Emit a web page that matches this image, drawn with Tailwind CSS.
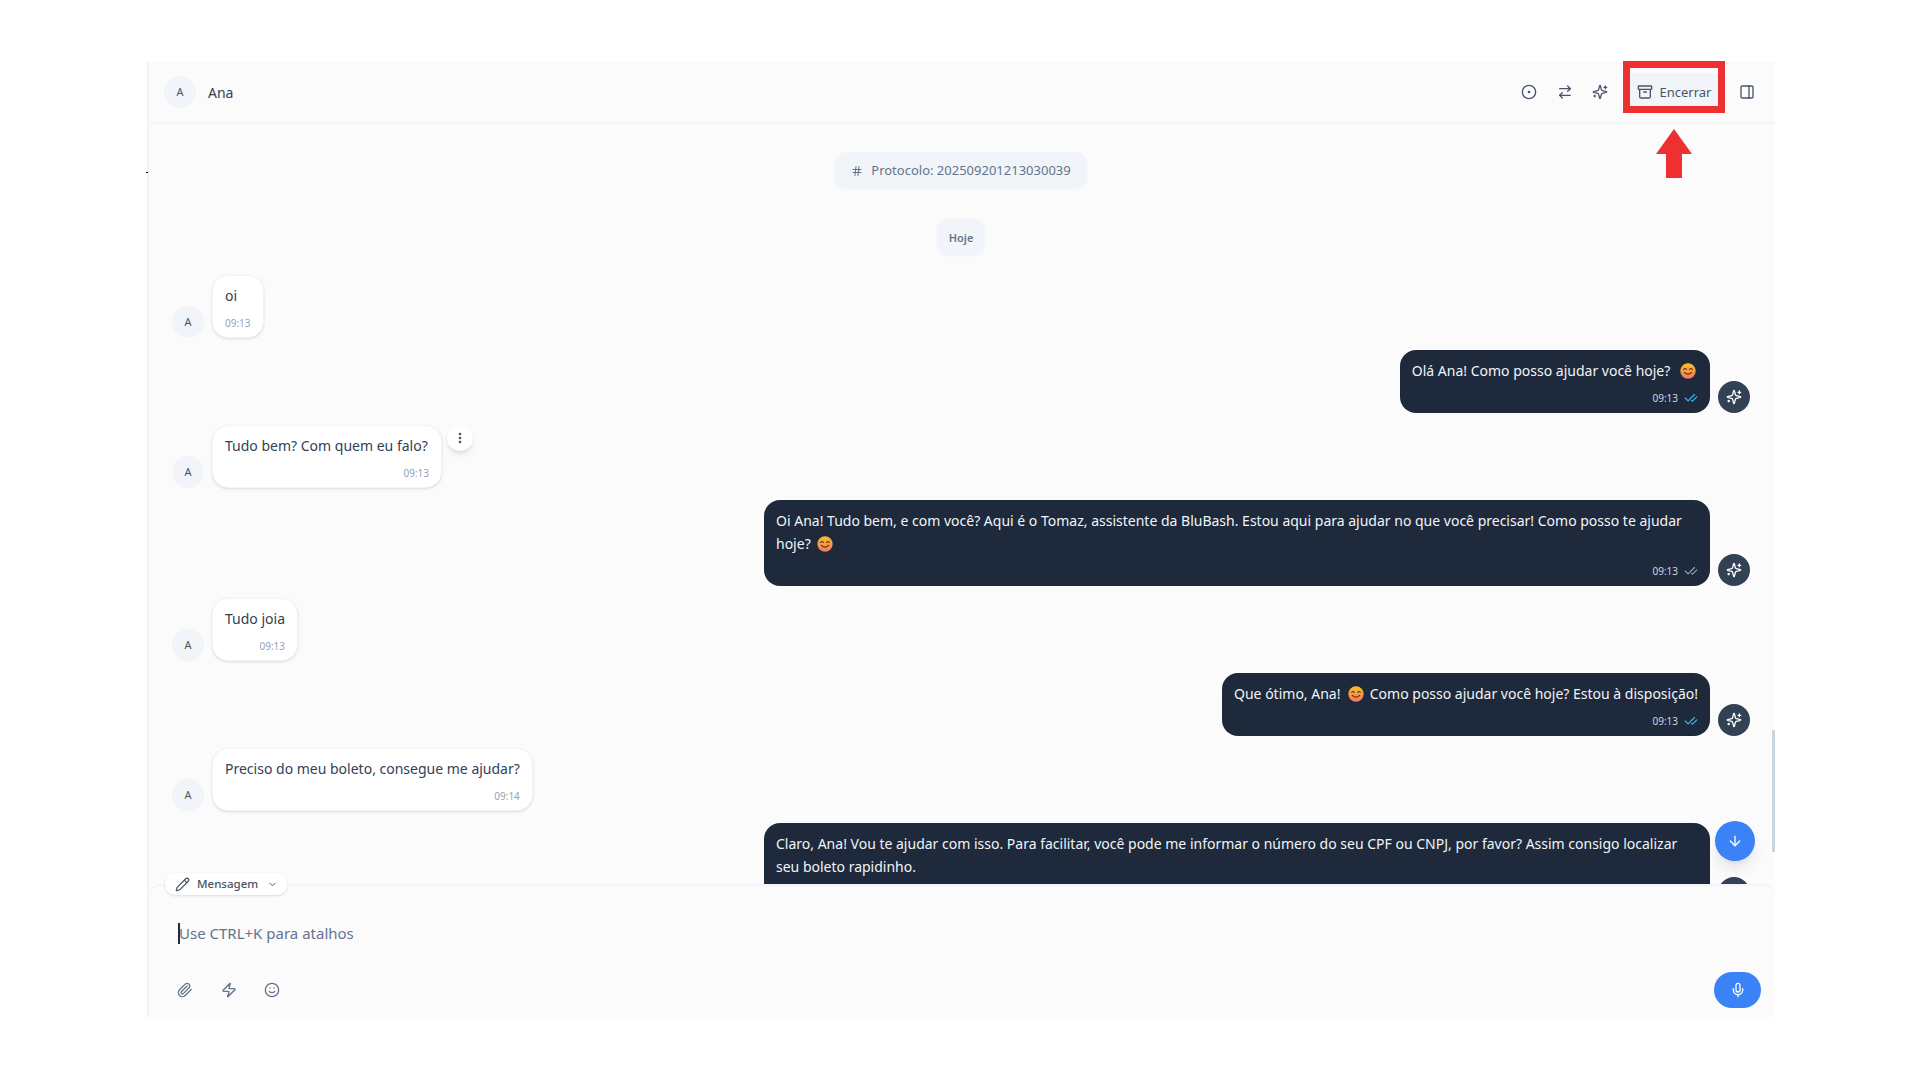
<!DOCTYPE html>
<html lang="pt">
<head>
  <meta charset="UTF-8" />
  <title>Chat - Ana</title>
  <script src="https://cdn.jsdelivr.net/npm/@tailwindcss/browser@4"></script>
</head>
<body class="bg-white min-h-screen font-['Noto_Sans',sans-serif] text-[#334155]">

  <svg class="absolute w-0 h-0">
    <defs><linearGradient id="emoji-fill" x1="0" y1="0" x2="0" y2="1"><stop offset="0" stop-color="#fbbf24"/><stop offset="1" stop-color="#f4766a"/></linearGradient></defs>
    <symbol id="sparkles" viewBox="0 0 24 24" fill="none" stroke="currentColor" stroke-width="2" stroke-linecap="round" stroke-linejoin="round">
      <path d="M9.937 15.5A2 2 0 0 0 8.5 14.063l-6.135-1.582a.5.5 0 0 1 0-.962L8.5 9.936A2 2 0 0 0 9.937 8.5l1.582-6.135a.5.5 0 0 1 .963 0L14.063 8.5A2 2 0 0 0 15.5 9.937l6.135 1.581a.5.5 0 0 1 0 .964L15.5 14.063a2 2 0 0 0-1.437 1.437l-1.582 6.135a.5.5 0 0 1-.963 0z"/><path d="M20 3v4"/><path d="M22 5h-4"/><path d="M4 17v2"/><path d="M5 18H3"/>
    </symbol>
    <symbol id="checks" viewBox="0 0 24 24" fill="none" stroke="currentColor" stroke-width="2" stroke-linecap="round" stroke-linejoin="round">
      <path d="M18 6 7 17l-5-5"/><path d="m22 10-7.5 7.5L13 16"/>
    </symbol>
    <symbol id="smile-emoji" viewBox="0 0 24 24">
      <circle cx="12" cy="12" r="11.5" fill="url(#emoji-fill)"/>
      <path d="M5.5 9.5q2-2.4 4 0M14.5 9.5q2-2.4 4 0" fill="none" stroke="#5b3416" stroke-width="1.7" stroke-linecap="round"/>
      <path d="M6.5 14q5.500 5.500 11 0" fill="none" stroke="#5b3416" stroke-width="1.8" stroke-linecap="round"/>
    </symbol>
  </svg>

  <!-- Chat panel -->
  <div class="absolute top-[62px] left-[147px] w-[1628px] h-[955px] flex flex-col bg-[#fbfbfc] border-l-2 border-[#f1f5f9]">

    <!-- Header -->
    <header class="h-[62px] shrink-0 flex items-center justify-between pl-[15px] pr-[20px] border-b-2 border-[#f1f5f9]">
      <div class="flex items-center gap-3">
        <div class="w-8 h-8 rounded-full bg-[#f1f5f9] flex items-center justify-center text-[11px] text-[#475569]">A</div>
        <span class="text-[14px] text-[#334155]">Ana</span>
      </div>
      <div class="flex items-center text-[#475569]">
        <svg class="w-4 h-4" viewBox="0 0 24 24" fill="none" stroke="currentColor" stroke-width="2" stroke-linecap="round" stroke-linejoin="round"><circle cx="12" cy="12" r="10"/><circle cx="12" cy="12" r="1"/></svg>
        <svg class="w-4 h-4 ml-5" viewBox="0 0 24 24" fill="none" stroke="currentColor" stroke-width="2" stroke-linecap="round" stroke-linejoin="round"><path d="m16 3 4 4-4 4"/><path d="M20 7H4"/><path d="m8 21-4-4 4-4"/><path d="M4 17h16"/></svg>
        <svg class="w-4 h-4 ml-[19px]"><use href="#sparkles"/></svg>
        <button class="ml-[22px] h-[38px] w-[88px] bg-[#f1f5f9] flex items-center justify-center gap-[7px] text-[13px] text-[#475569]">
          <svg class="w-4 h-4" viewBox="0 0 24 24" fill="none" stroke="currentColor" stroke-width="2" stroke-linecap="round" stroke-linejoin="round"><rect width="20" height="5" x="2" y="3" rx="1"/><path d="M4 8v11a2 2 0 0 0 2 2h12a2 2 0 0 0 2-2V8"/><path d="M10 12h4"/></svg>
          <span class="leading-[16px]">Encerrar</span>
        </button>
        <svg class="w-4 h-4 ml-[21px]" viewBox="0 0 24 24" fill="none" stroke="currentColor" stroke-width="2" stroke-linecap="round" stroke-linejoin="round"><rect width="18" height="18" x="3" y="3" rx="2"/><path d="M15 3v18"/></svg>
      </div>
    </header>

    <!-- Messages -->
    <main class="relative flex-1 overflow-hidden pt-[28px] pl-[23px] pr-[25px] flex flex-col">
      <div class="shrink-0 self-center h-[36px] w-[252px] rounded-[12px] bg-[#f1f5f9] flex items-center justify-center gap-[8px] pt-[2px] text-[13px] text-[#64748b] shadow-sm shadow-slate-100">
        <svg class="w-3 h-3 text-[#64748b]" viewBox="0 0 24 24" fill="none" stroke="currentColor" stroke-width="2" stroke-linecap="round"><path d="M4 9h16M4 15h16M10 3 8 21M16 3l-2 18"/></svg>
        Protocolo: 202509201213030039
      </div>
      <div class="shrink-0 self-center mt-[31px] h-[36px] w-[48px] rounded-[12px] bg-[#f1f5f9] flex items-center justify-center pt-[3px] text-[11px] font-semibold text-[#64748b] shadow-sm shadow-slate-100">Hoje</div>

      <div class="shrink-0 mt-[20px] flex flex-col gap-3">
        <!-- oi -->
        <div class="flex items-end gap-2">
          <div class="w-8 h-8 rounded-full bg-[#f1f5f9] flex items-center justify-center text-[11px] text-[#475569]">A</div>
          <div class="bg-white rounded-[16px] border border-[#f1f5f9] shadow-sm px-3 pt-[8px] pb-[7px]">
            <p class="text-[14px] leading-[23px] text-[#334155]">oi</p>
            <p class="mt-[9px] h-[14px] leading-[14px] text-[10px] text-[#94a3b8] text-right">09:13</p>
          </div>
        </div>

        <!-- Olá -->
        <div class="flex items-end justify-end gap-2">
          <div class="bg-[#1e293b] rounded-[16px] px-3 pt-[9px] pb-[8px]">
            <p class="text-[14px] leading-[23px] text-[#f1f5f9]">Olá Ana! Como posso ajudar você hoje? <svg class="inline w-4 h-4 ml-[6px] mr-[2px] align-[-3px]"><use href="#smile-emoji"/></svg></p>
            <div class="mt-[9px] h-[14px] flex items-center justify-end gap-[6px] text-[10px] leading-[14px] text-[#cbd5e1]">09:13 <svg class="w-[14px] h-[14px] text-[#38bdf8]"><use href="#checks"/></svg></div>
          </div>
          <div class="w-8 h-8 rounded-full bg-[#334155] flex items-center justify-center text-white"><svg class="w-4 h-4"><use href="#sparkles"/></svg></div>
        </div>

        <!-- Tudo bem -->
        <div class="flex items-end gap-2">
          <div class="w-8 h-8 rounded-full bg-[#f1f5f9] flex items-center justify-center text-[11px] text-[#475569]">A</div>
          <div class="relative w-[230px] bg-white rounded-[16px] border border-[#f1f5f9] shadow-sm px-3 pt-[8px] pb-[7px]">
            <p class="text-[14px] leading-[23px] text-[#334155]">Tudo bem? Com quem eu falo?</p>
            <p class="mt-[9px] h-[14px] leading-[14px] text-[10px] text-[#94a3b8] text-right">09:13</p>
            <div class="absolute top-[-1px] left-full ml-[6px] w-[26px] h-[26px] rounded-full bg-white shadow-md flex items-center justify-center text-[#475569]">
              <svg class="w-4 h-4" viewBox="0 0 24 24" fill="currentColor"><circle cx="12" cy="6" r="2"/><circle cx="12" cy="12" r="2"/><circle cx="12" cy="18" r="2"/></svg>
            </div>
          </div>
        </div>

        <!-- Oi Ana -->
        <div class="flex items-end justify-end gap-2">
          <div class="w-[946px] bg-[#1e293b] rounded-[16px] px-3 pt-[9px] pb-[8px]">
            <p class="text-[14px] leading-[23px] text-[#f1f5f9]">Oi Ana! Tudo bem, e com você? Aqui é o Tomaz, assistente da BluBash. Estou aqui para ajudar no que você precisar! Como posso te ajudar hoje? <svg class="inline w-4 h-4 ml-[3px] align-[-3px]"><use href="#smile-emoji"/></svg></p>
            <div class="mt-[9px] h-[14px] flex items-center justify-end gap-[6px] text-[10px] leading-[14px] text-[#cbd5e1]">09:13 <svg class="w-[14px] h-[14px] text-[#94a3b8]"><use href="#checks"/></svg></div>
          </div>
          <div class="w-8 h-8 rounded-full bg-[#334155] flex items-center justify-center text-white"><svg class="w-4 h-4"><use href="#sparkles"/></svg></div>
        </div>

        <!-- Tudo joia -->
        <div class="flex items-end gap-2">
          <div class="w-8 h-8 rounded-full bg-[#f1f5f9] flex items-center justify-center text-[11px] text-[#475569]">A</div>
          <div class="bg-white rounded-[16px] border border-[#f1f5f9] shadow-sm px-3 pt-[8px] pb-[7px]">
            <p class="text-[14px] leading-[23px] text-[#334155]">Tudo joia</p>
            <p class="mt-[9px] h-[14px] leading-[14px] text-[10px] text-[#94a3b8] text-right">09:13</p>
          </div>
        </div>

        <!-- Que ótimo -->
        <div class="flex items-end justify-end gap-2">
          <div class="bg-[#1e293b] rounded-[16px] px-3 pt-[9px] pb-[8px]">
            <p class="text-[14px] leading-[23px] text-[#f1f5f9]">Que ótimo, Ana! <svg class="inline w-4 h-4 ml-[4px] mr-[2px] align-[-3px]"><use href="#smile-emoji"/></svg> Como posso ajudar você hoje? Estou à disposição!</p>
            <div class="mt-[9px] h-[14px] flex items-center justify-end gap-[6px] text-[10px] leading-[14px] text-[#cbd5e1]">09:13 <svg class="w-[14px] h-[14px] text-[#38bdf8]"><use href="#checks"/></svg></div>
          </div>
          <div class="w-8 h-8 rounded-full bg-[#334155] flex items-center justify-center text-white"><svg class="w-4 h-4"><use href="#sparkles"/></svg></div>
        </div>

        <!-- Preciso -->
        <div class="flex items-end gap-2">
          <div class="w-8 h-8 rounded-full bg-[#f1f5f9] flex items-center justify-center text-[11px] text-[#475569]">A</div>
          <div class="bg-white rounded-[16px] border border-[#f1f5f9] shadow-sm px-3 pt-[8px] pb-[7px]">
            <p class="text-[14px] leading-[23px] text-[#334155]">Preciso do meu boleto, consegue me ajudar?</p>
            <p class="mt-[9px] h-[14px] leading-[14px] text-[10px] text-[#94a3b8] text-right">09:14</p>
          </div>
        </div>

        <!-- Claro: cut off by the composer, its time row never shows -->
        <div class="flex items-end justify-end gap-2">
          <div class="w-[946px] bg-[#1e293b] rounded-[16px] px-3 pt-[9px] pb-[8px]">
            <p class="text-[14px] leading-[23px] text-[#f1f5f9]">Claro, Ana! Vou te ajudar com isso. Para facilitar, você pode me informar o número do seu CPF ou CNPJ, por favor? Assim consigo localizar seu boleto rapidinho.</p>
            <div class="mt-[9px] h-[14px]"></div>
          </div>
          <div class="w-8 h-8 rounded-full bg-[#334155] flex items-center justify-center text-white"><svg class="w-4 h-4"><use href="#sparkles"/></svg></div>
        </div>
      </div>

      <!-- Scroll to bottom + scrollbar -->
      <button class="absolute top-[697px] right-[20px] w-10 h-10 rounded-full bg-[#3b82f6] shadow-lg flex items-center justify-center text-white">
        <svg class="w-4 h-4" viewBox="0 0 24 24" fill="none" stroke="currentColor" stroke-width="2" stroke-linecap="round" stroke-linejoin="round"><path d="M12 5v14"/><path d="m19 12-7 7-7-7"/></svg>
      </button>
      <div class="absolute top-[606px] right-0 w-[3px] h-[122px] bg-[#cbd5e1]"></div>
    </main>

    <!-- Composer -->
    <footer class="relative h-[133px] shrink-0 bg-[#fbfbfc] border-t-2 border-[#f1f5f9] rounded-t-[12px] pl-[29px] pr-[14px]">
      <div class="absolute top-[-13px] left-[16px] w-[122px] h-[22px] rounded-[10px] bg-white shadow-sm flex items-center pl-[10px] gap-[7px] text-[11.500px] font-medium text-[#475569]">
        <svg class="w-[15px] h-[15px]" viewBox="0 0 24 24" fill="none" stroke="currentColor" stroke-width="2" stroke-linecap="round" stroke-linejoin="round"><path d="M21.174 6.812a1 1 0 0 0-3.986-3.987L3.842 16.174a2 2 0 0 0-.5.83l-1.321 4.352a.5.5 0 0 0 .623.622l4.353-1.32a2 2 0 0 0 .83-.497z"/><path d="m15 5 4 4"/></svg>
        Mensagem
        <svg class="w-[11px] h-[11px] ml-[2px]" viewBox="0 0 24 24" fill="none" stroke="currentColor" stroke-width="2" stroke-linecap="round" stroke-linejoin="round"><path d="m6 9 6 6 6-6"/></svg>
      </div>
      <div class="pt-[37px] flex items-center h-[58px]">
        <span class="w-[2px] h-[21px] bg-[#1e293b] shrink-0"></span>
        <span class="text-[15px] leading-[21px] text-[#64748b] -ml-[1px]">Use CTRL+K para atalhos</span>
      </div>
      <div class="mt-[28px] flex items-center justify-between">
        <div class="flex items-center text-[#64748b] -ml-[1px]">
          <svg class="w-4 h-4" viewBox="0 0 24 24" fill="none" stroke="currentColor" stroke-width="2" stroke-linecap="round" stroke-linejoin="round"><path d="m21.440 11.050-9.190 9.190a6 6 0 0 1-8.490-8.490l8.570-8.570A4 4 0 1 1 18 8.840l-8.590 8.570a2 2 0 0 1-2.830-2.830l8.490-8.480"/></svg>
          <svg class="w-4 h-4 ml-[28px]" viewBox="0 0 24 24" fill="none" stroke="currentColor" stroke-width="2" stroke-linecap="round" stroke-linejoin="round"><path d="M4 14a1 1 0 0 1-.78-1.630l9.900-10.200a.5.5 0 0 1 .86.46l-1.920 6.020A1 1 0 0 0 13 10h7a1 1 0 0 1 .78 1.630l-9.900 10.200a.5.5 0 0 1-.86-.46l1.920-6.020A1 1 0 0 0 11 14z"/></svg>
          <svg class="w-4 h-4 ml-[27px]" viewBox="0 0 24 24" fill="none" stroke="currentColor" stroke-width="2" stroke-linecap="round" stroke-linejoin="round"><circle cx="12" cy="12" r="10"/><path d="M8 14s1.500 2 4 2 4-2 4-2"/><line x1="9" x2="9.010" y1="9" y2="9"/><line x1="15" x2="15.010" y1="9" y2="9"/></svg>
        </div>
        <button class="w-[47px] h-[36px] rounded-full bg-[#3b82f6] flex items-center justify-center text-white">
          <svg class="w-4 h-4" viewBox="0 0 24 24" fill="none" stroke="currentColor" stroke-width="2" stroke-linecap="round" stroke-linejoin="round"><path d="M12 2a3 3 0 0 0-3 3v7a3 3 0 0 0 6 0V5a3 3 0 0 0-3-3Z"/><path d="M19 10v2a7 7 0 0 1-14 0v-2"/><line x1="12" x2="12" y1="19" y2="22"/></svg>
        </button>
      </div>
    </footer>
  </div>

  <!-- Annotation over the screenshot -->
  <div class="absolute top-[61px] left-[1623px] w-[102px] h-[52px] border-[7px] border-[#ef3030]"></div>
  <svg class="absolute top-[129px] left-[1656px] w-[36px] h-[49px]" viewBox="0 0 36 49"><path d="M18 0 36 25H26V49H10V25H0Z" fill="#ef3030"/></svg>
  <div class="absolute top-[172px] left-[146px] w-[2px] h-[1px] bg-black"></div>
</body>
</html>
